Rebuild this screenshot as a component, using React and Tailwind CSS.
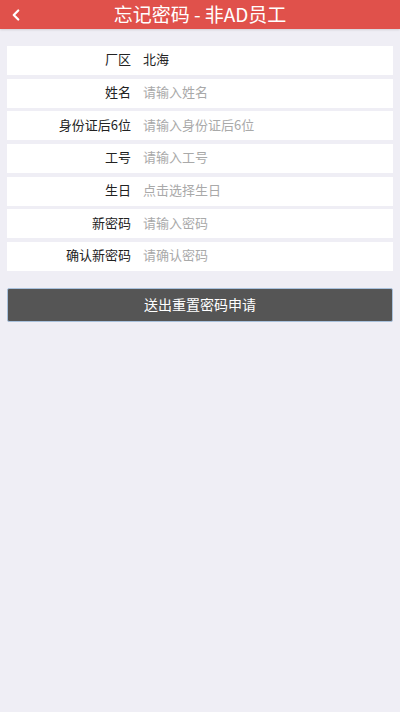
import { ChevronLeft } from "lucide-react";

const fields = [
  { label: "厂区", value: "北海" },
  { label: "姓名", placeholder: "请输入姓名" },
  { label: "身份证后6位", placeholder: "请输入身份证后6位" },
  { label: "工号", placeholder: "请输入工号" },
  { label: "生日", placeholder: "点击选择生日" },
  { label: "新密码", placeholder: "请输入密码" },
  { label: "确认新密码", placeholder: "请确认密码" },
];

export default function App() {
  return (
    <div
      className="min-h-[712px] bg-[#efeef5] text-[13px]"
      style={{ fontFamily: '"Noto Sans CJK SC", "Noto Sans", sans-serif' }}
    >
      {/* Header */}
      <div className="relative h-[29px] bg-[#e0514b] flex items-center justify-center pb-[2px] shadow-[0_1px_2px_rgba(0,0,0,0.12)]">
        <ChevronLeft
          size={18}
          strokeWidth={3}
          className="absolute left-[7px] top-[6px] text-white"
        />
        <h1 className="text-white text-[19px] leading-none">忘记密码 - 非AD员工</h1>
      </div>

      {/* Form */}
      <div className="px-[7px] pt-[17px] flex flex-col gap-[3.7px]">
        {fields.map((f) => (
          <div key={f.label} className="h-[29px] bg-white flex items-center pb-[3px]">
            <span className="w-[124px] shrink-0 text-right text-[#222]">{f.label}</span>
            <span
              className={`ml-[12px] ${f.value ? "text-[#222]" : "text-[#a9a9a9]"}`}
            >
              {f.value || f.placeholder}
            </span>
          </div>
        ))}
      </div>

      <div className="px-[7px] pt-[17px]">
        <button className="w-full h-[34px] bg-[#555555] border border-[#a9c1dc] rounded-[2px] text-white text-[14px] pb-[2px]">
          送出重置密码申请
        </button>
      </div>
    </div>
  );
}
